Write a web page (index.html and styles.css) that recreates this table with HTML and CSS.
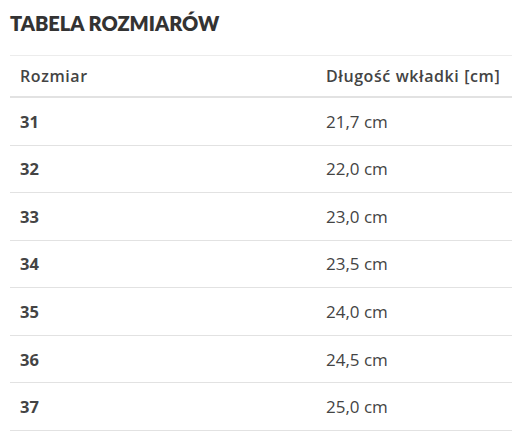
FILE: index.html
```html
<!DOCTYPE html>
<html lang="pl">
<head>
<meta charset="utf-8">
<link rel="stylesheet" href="styles.css">
</head>
<body>
<div class="wrap">
  <h2 class="title">TABELA ROZMIARÓW</h2>
  <table class="sizes">
    <colgroup><col class="col-size"><col class="col-len"></colgroup>
    <thead>
      <tr><th>Rozmiar</th><th>Długość wkładki [cm]</th></tr>
    </thead>
    <tbody>
      <tr><td class="num">31</td><td>21,7 cm</td></tr>
      <tr><td class="num">32</td><td>22,0 cm</td></tr>
      <tr><td class="num">33</td><td>23,0 cm</td></tr>
      <tr><td class="num">34</td><td>23,5 cm</td></tr>
      <tr><td class="num">35</td><td>24,0 cm</td></tr>
      <tr><td class="num">36</td><td>24,5 cm</td></tr>
      <tr><td class="num">37</td><td>25,0 cm</td></tr>
    </tbody>
  </table>
</div>
</body>
</html>
```
FILE: styles.css
```css
html, body { margin: 0; padding: 0; background: #fff; }
.wrap { padding: 0 0 0 10px; }
.title {
  margin: 0;
  padding-top: 11px;
  height: 55px;
  box-sizing: border-box;
  font-family: Lato, sans-serif;
  font-weight: 800;
  font-size: 20px;
  line-height: 24px;
  color: #333;
}
.sizes {
  width: 502px;
  table-layout: fixed;
  border-collapse: collapse;
  border-top: 1px solid #ececec;
}
.col-size { width: 306px; }
.col-len { width: 196px; }
.sizes th, .sizes td {
  text-align: left;
  padding: 0 0 0 10px;
  color: #444;
  white-space: nowrap;
}
.sizes th {
  height: 40px;
  font-family: "Open Sans", sans-serif;
  font-weight: 600;
  font-size: 16px;
  letter-spacing: 0.6px;
  border-bottom: 2px solid #e2e2e2;
  vertical-align: middle;
}
.sizes td {
  height: 46.57px;
  font-family: "Open Sans", sans-serif;
  font-size: 17px;
  border-bottom: 1px solid #e2e2e2;
}
.sizes td.num { font-weight: 700; font-size: 16.5px; }
```
